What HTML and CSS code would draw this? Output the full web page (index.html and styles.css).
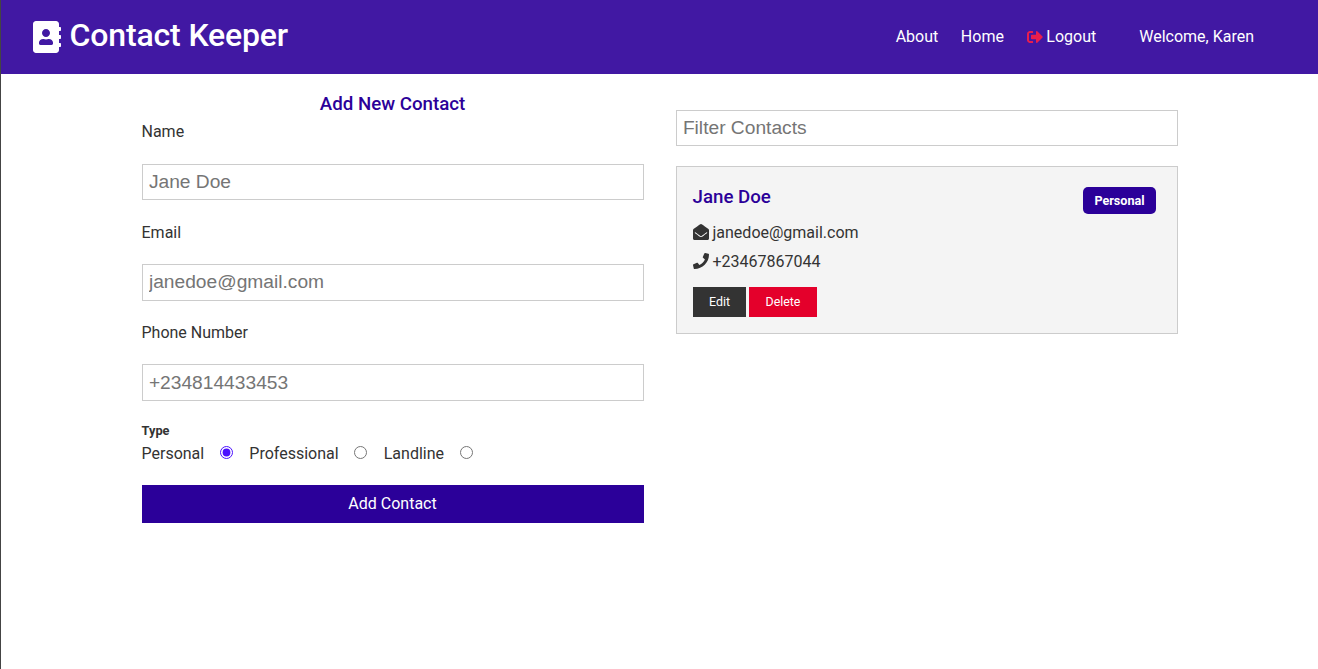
FILE: index.html
```html
<!DOCTYPE html>
<html lang="en">
<head>
<meta charset="utf-8">
<title>Contact Keeper</title>
<link rel="stylesheet" href="styles.css">
</head>
<body>
<nav class="navbar">
  <h1 class="brand">
    <svg class="brand-icon" viewBox="0 0 448 512"><path d="M436 160c6.6 0 12-5.4 12-12v-40c0-6.6-5.4-12-12-12h-20V48c0-26.5-21.5-48-48-48H48C21.5 0 0 21.5 0 48v416c0 26.5 21.5 48 48 48h320c26.5 0 48-21.5 48-48v-48h20c6.6 0 12-5.4 12-12v-40c0-6.6-5.4-12-12-12h-20v-64h20c6.6 0 12-5.4 12-12v-40c0-6.6-5.4-12-12-12h-20v-64h20zm-228-32c35.3 0 64 28.7 64 64s-28.7 64-64 64-64-28.7-64-64 28.7-64 64-64zm112 236.8c0 10.6-10 19.2-22.4 19.2H118.4C106 384 96 375.4 96 364.8v-19.2c0-31.8 30.1-57.6 67.2-57.6h5c12.3 5.1 25.7 8 39.8 8s27.6-2.9 39.8-8h5c37.1 0 67.2 25.8 67.2 57.6v19.2z"/></svg>
    <span>Contact Keeper</span>
  </h1>
  <ul class="nav-links">
    <li><a href="#">About</a></li>
    <li class="nav-home"><a href="#">Home</a></li>
    <li><a href="#" class="logout"><svg class="logout-icon" viewBox="0 0 512 512"><path d="M497 273L329 441c-15 15-41 4.5-41-17v-96H152c-13.3 0-24-10.7-24-24v-96c0-13.3 10.7-24 24-24h136V88c0-21.4 25.9-32 41-17l168 168c9.3 9.4 9.3 24.6 0 34zM192 436v-40c0-6.6-5.4-12-12-12H96c-17.7 0-32-14.3-32-32V160c0-17.7 14.3-32 32-32h84c6.6 0 12-5.4 12-12V76c0-6.6-5.4-12-12-12H96c-53 0-96 43-96 96v192c0 53 43 96 96 96h84c6.6 0 12-5.4 12-12z"/></svg>Logout</a></li>
    <li class="welcome">Welcome, Karen</li>
  </ul>
</nav>
<main class="container">
  <form class="contact-form">
    <h2 class="form-title">Add New Contact</h2>
    <label class="field-label" for="name">Name</label>
    <input class="text-input" id="name" type="text" placeholder="Jane Doe">
    <label class="field-label" for="email">Email</label>
    <input class="text-input" id="email" type="text" placeholder="janedoe@gmail.com">
    <label class="field-label" for="phone">Phone Number</label>
    <input class="text-input" id="phone" type="text" placeholder="+234814433453">
    <h5 class="type-title">Type</h5>
    <div class="radio-row">
      <label for="r1">Personal</label><input class="radio" id="r1" type="radio" name="type" checked>
      <label for="r2">Professional</label><input class="radio" id="r2" type="radio" name="type">
      <label for="r3">Landline</label><input class="radio" id="r3" type="radio" name="type">
    </div>
    <button class="submit-btn" type="button">Add Contact</button>
  </form>
  <section class="contacts">
    <input class="text-input filter-input" type="text" placeholder="Filter Contacts">
    <article class="card">
      <div class="card-head">
        <h3 class="card-name">Jane Doe</h3>
        <span class="badge">Personal</span>
      </div>
      <ul class="card-list">
        <li><svg class="info-icon" viewBox="0 0 512 512"><path d="M512 464c0 26.51-21.49 48-48 48H48c-26.51 0-48-21.49-48-48V200.724a48 48 0 0 1 18.387-37.776c24.913-19.529 45.501-35.365 164.2-121.511C199.412 29.17 232.797-.347 256 .003c23.198-.354 56.596 29.172 73.413 41.433 118.687 86.137 139.303 101.995 164.2 121.512A48 48 0 0 1 512 200.724V464zm-65.666-196.605c-2.563-3.728-7.7-4.595-11.339-1.907-22.845 16.873-55.462 40.705-105.582 77.079-16.825 12.266-50.21 41.781-73.413 41.43-23.211.344-56.559-29.143-73.413-41.43-50.114-36.37-82.734-60.204-105.582-77.079-3.639-2.688-8.776-1.821-11.339 1.907l-9.072 13.196a7.998 7.998 0 0 0 1.839 10.967c22.887 16.899 55.454 40.69 105.303 76.868 20.274 14.781 56.524 47.813 92.264 47.573 35.724.242 71.961-32.771 92.263-47.573 49.85-36.179 82.418-59.97 105.303-76.868a7.998 7.998 0 0 0 1.839-10.967l-9.071-13.196z"/></svg>janedoe@gmail.com</li>
        <li><svg class="info-icon" viewBox="0 0 512 512"><path d="M493.4 24.6l-104-24c-11.3-2.6-22.9 3.3-27.5 13.9l-48 112c-4.2 9.8-1.4 21.3 6.9 28l60.6 49.6c-36 76.7-98.9 140.5-177.2 177.2l-49.6-60.6c-6.8-8.3-18.2-11.1-28-6.9l-112 48C3.9 366.5-2 378.1.6 389.4l24 104C27.1 504.2 36.7 512 48 512c256.1 0 464-207.5 464-464 0-11.2-7.7-20.9-18.6-23.4z"/></svg>+23467867044</li>
      </ul>
      <div class="card-actions">
        <button class="btn btn-dark" type="button">Edit</button>
        <button class="btn btn-danger" type="button">Delete</button>
      </div>
    </article>
  </section>
</main>
</body>
</html>
```

FILE: styles.css
```css
* { box-sizing: border-box; }
html, body { height: 100%; }
body {
  margin: 0;
  border-left: 1px solid #444;
  background: #fff;
  color: #333;
  font-family: Roboto, sans-serif;
  font-size: 16px;
  line-height: 25.6px;
  overflow: hidden;
}
.navbar {
  height: 74px;
  background: #4118a3;
  color: #fff;
  display: flex;
  align-items: center;
  justify-content: space-between;
  padding: 0 64px 0 32px;
}
.brand {
  margin: -4px 0 0;
  display: flex;
  align-items: center;
  gap: 8.5px;
  font-size: 32px;
  font-weight: 500;
  line-height: 40px;
  letter-spacing: -0.15px;
}
.brand-icon { width: 28px; height: 32px; fill: #fff; margin-top: 4px; }
.nav-links {
  list-style: none;
  margin: 0;
  padding: 0;
  display: flex;
  align-items: center;
  gap: 23px;
}
.nav-home { margin: 0 0.4px 0 -0.4px; }
.nav-links a { color: #fff; text-decoration: none; display: flex; align-items: center; }
.logout-icon { width: 16px; height: 16px; fill: #e91e4d; margin-right: 3px; }
.welcome { margin-left: 20px; }
.container {
  width: 1036px;
  margin-left: 140.5px;
  display: grid;
  grid-template-columns: 502px 502px;
  gap: 32px;
}
.form-title {
  margin: 16.8px 0 0;
  text-align: center;
  color: #2b0099;
  font-size: 18.72px;
  font-weight: 500;
  line-height: 27px;
}
.field-label { display: block; height: 25.6px; margin-top: 19.6px; }
.form-title + .field-label { margin-top: 1px; }
.text-input {
  display: block;
  width: 100%;
  height: 36.6px;
  margin-top: 18.6px;
  padding: 6.4px;
  border: 1px solid #ccc;
  border-radius: 0;
  background: #fff;
  font-family: "Liberation Sans", Arial, sans-serif;
  font-size: 19.2px;
  color: #333;
  outline: none;
}
.form-title + .field-label + .text-input { margin-top: 19.2px; }
.text-input::placeholder { color: #757575; }
.type-title {
  margin: 20px 0 0;
  font-size: 12.8px;
  font-weight: 700;
  line-height: 20px;
}
.radio-row { display: flex; align-items: center; height: 25.6px; }
.radio {
  width: 13px;
  height: 13px;
  margin: 0 16.5px 3px 15.6px;
  accent-color: #4a10ff;
}
.submit-btn {
  display: block;
  width: 100%;
  height: 37.6px;
  margin-top: 18.8px;
  padding: 0 0 2px;
  border: 0;
  background: #2b0099;
  color: #fff;
  font-family: Roboto, sans-serif;
  font-size: 16px;
}
.filter-input { margin-top: 35.6px; }
.card {
  margin-top: 19.8px;
  padding: 16px;
  border: 1px solid #ccc;
  background: #f4f4f4;
}
.card-head { display: flex; justify-content: space-between; align-items: flex-start; }
.card-name {
  margin: 0;
  color: #2b0099;
  font-size: 18.72px;
  font-weight: 500;
  line-height: 28px;
}
.badge {
  margin: 4px 5px 0 0;
  width: 73px;
  height: 27px;
  padding-left: 1px;
  border-radius: 5px;
  background: #2b0099;
  color: #fff;
  font-size: 12.6px;
  font-weight: 700;
  line-height: 27px;
  text-align: center;
}
.card-list { list-style: none; margin: 4.5px 0 0; padding: 0; }
.card-list li { display: flex; align-items: center; height: 29px; }
.info-icon { width: 16px; height: 16px; fill: #333; margin: 0 4px 1px 0; flex: none; }
.card-actions { display: flex; gap: 3px; margin-top: 10.5px; }
.btn {
  height: 30px;
  padding: 0 0 0 1px;
  border: 0;
  color: #fff;
  font-family: Roboto, sans-serif;
  font-size: 12.4px;
}
.btn-dark { width: 53px; background: #333; }
.btn-danger { width: 68px; background: #e4002b; }
```
